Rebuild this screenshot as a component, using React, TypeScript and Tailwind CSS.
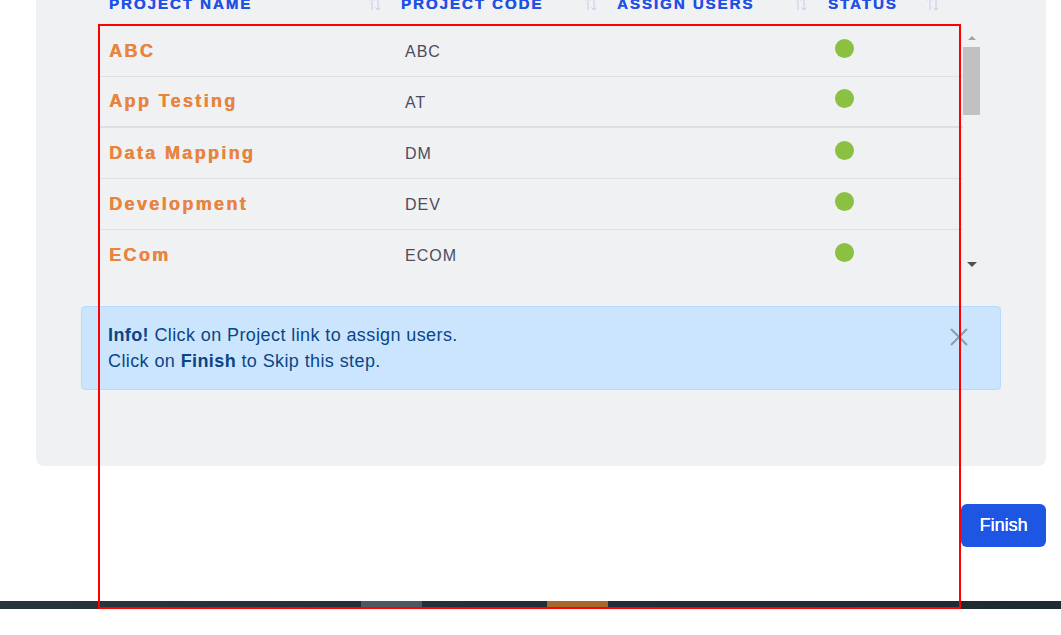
const projects = [
  { name: "ABC", code: "ABC" },
  { name: "App Testing", code: "AT" },
  { name: "Data Mapping", code: "DM" },
  { name: "Development", code: "DEV" },
  { name: "ECom", code: "ECOM" },
  { name: "Finance", code: "FIN" },
  { name: "Marketing", code: "MKT" },
]

const columns = [
  { label: "Project Name", w: "w-[292px]", pr: "pr-[9px]" },
  { label: "Project Code", w: "w-[216px]", pr: "pr-[9px]" },
  { label: "Assign Users", w: "w-[211px]", pr: "pr-[10px]" },
  { label: "Status", w: "w-[142px]", pr: "pr-[20px]" },
]

function SortIcon() {
  return (
    <svg width="16" height="14" viewBox="0 0 16 14" className="shrink-0">
      <g stroke="#c5cbea" strokeWidth="1" fill="none">
        <path d="M5 13V1M2.5 3.5L5 1l2.5 2.5" />
        <path d="M11 1v12M8.5 10.5L11 13l2.5-2.5" />
      </g>
    </svg>
  )
}

export default function App() {
  return (
    <div className="relative h-[635px] w-[1061px] overflow-hidden bg-white font-['Liberation_Sans',Arial,sans-serif]">
      {/* panel */}
      <div className="-mt-[20px] ml-[36px] w-[1010px] rounded-lg bg-[#f0f1f3] pt-[14px] pb-[76px]">
        <div className="ml-[64px] flex h-[20px] w-[880px] items-center">
          {columns.map((c) => (
            <div
              key={c.label}
              className={`${c.w} ${c.pr} flex items-center justify-between pl-[9px]`}
            >
              <span className="text-[15px] leading-[20px] font-bold tracking-[2px] whitespace-nowrap text-[#2150e6] uppercase [text-shadow:0.3px_0_0_#2150e6]">
                {c.label}
              </span>
              <SortIcon />
            </div>
          ))}
        </div>

        <div className="mt-[12px] ml-[64px] flex h-[254px] w-[880px] overflow-hidden">
          <div className="w-[863px]">
            {projects.map((p, i) => (
              <div
                key={p.code}
                className={`flex h-[51px] items-center ${
                  i === 1
                    ? "border-b-2 border-[#dcdee6]"
                    : "border-b border-[#dfe0e4]"
                }`}
              >
                <div className="w-[292px] pl-[9px] text-[18px] font-bold tracking-[2.35px] text-[#e8843e] [text-shadow:0.45px_0_0_#e8843e]">
                  {p.name}
                </div>
                <div className="mt-[2px] w-[216px] pl-[13px] text-[16px] tracking-[1px] text-[#4d4b5e]">
                  {p.code}
                </div>
                <div className="w-[211px]" />
                <div className="w-[142px] pl-[16px]">
                  <div className="-mt-[6px] h-[19px] w-[19px] rounded-full bg-[#8cc043]" />
                </div>
              </div>
            ))}
          </div>
          {/* scrollbar */}
          <div className="flex w-[17px] flex-col items-center">
            <div className="mt-[10px] h-0 w-0 border-x-[4px] border-b-[4px] border-x-transparent border-b-[#a3a3a3]" />
            <div className="mt-[7px] h-[68px] w-[17px] bg-[#c1c1c1]" />
            <div className="mt-auto mb-[13px] h-0 w-0 border-x-[5px] border-t-[5px] border-x-transparent border-t-[#505050]" />
          </div>
        </div>

        <div className="relative mt-[26px] ml-[45px] h-[84px] w-[920px] rounded border border-[#b8daff] bg-[#cce5ff] pt-[15px] pl-[26px] text-[18px] leading-[26px] tracking-[0.4px] text-[#0b4584]">
          <p>
            <b>Info!</b> Click on Project link to assign users.
          </p>
          <p>
            Click on <b>Finish</b> to Skip this step.
          </p>
          <button className="absolute top-[21px] right-[32px]">
            <svg width="18" height="18" viewBox="0 0 18 18">
              <path
                d="M1 1l16 16M17 1L1 17"
                stroke="#8d9aa8"
                strokeWidth="2"
              />
            </svg>
          </button>
        </div>
      </div>

      <div className="mt-[38px] flex justify-end pr-[15px]">
        <button className="h-[43px] w-[85px] rounded-md bg-[#1d56e3] text-[18px] text-white [text-shadow:0.3px_0_0_#fff]">
          Finish
        </button>
      </div>

      {/* bottom strip */}
      <div className="mt-[54px] flex h-[8px] bg-gradient-to-r from-[#28353b] via-[#232f36] to-[#1f2a31]">
        <div className="w-[361px]" />
        <div className="w-[61px] bg-[#4f585e]" />
        <div className="w-[125px]" />
        <div className="w-[61px] bg-[#a8672c]" />
      </div>

      {/* highlight box */}
      <div className="pointer-events-none absolute top-[24px] left-[98px] h-[585px] w-[863px] border-2 border-[#ff0000]" />
    </div>
  )
}
